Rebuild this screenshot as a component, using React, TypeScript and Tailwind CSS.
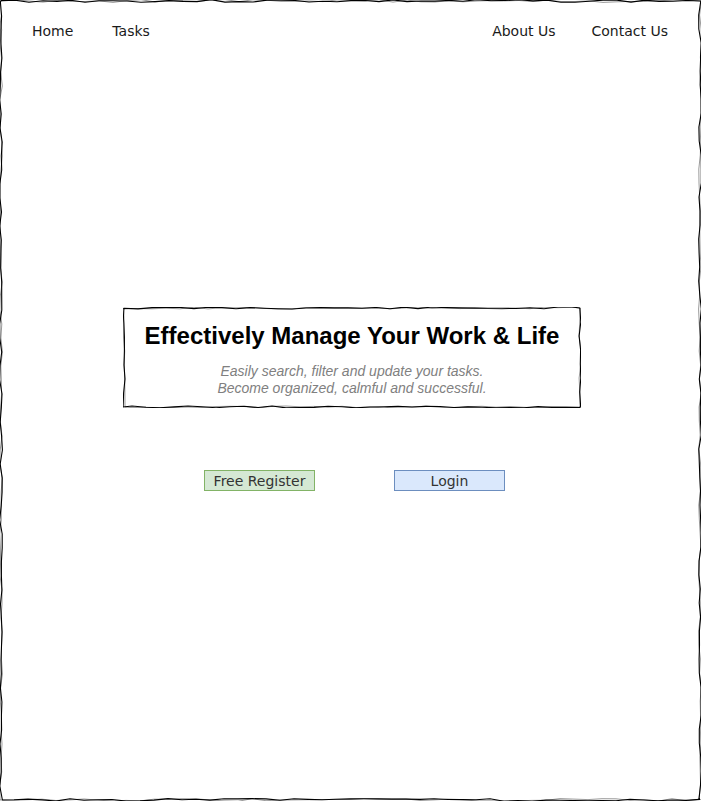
import React from "react";

// deterministic jitter so the sketch border is stable between renders
function rng(seed: number) {
    let s = seed;
    return () => {
        s = (s * 9301 + 49297) % 233280;
        return s / 233280;
    };
}

function roughRect(w: number, h: number, inset: number, seed: number, amp: number) {
    const r = rng(seed);
    const j = () => (r() - 0.5) * 2 * amp;
    const pts: [number, number][] = [];
    const step = 14;
    const x0 = inset, y0 = inset, x1 = w - inset, y1 = h - inset;
    for (let x = x0; x < x1; x += step) pts.push([x, y0 + j()]);
    for (let y = y0; y < y1; y += step) pts.push([x1 + j(), y]);
    for (let x = x1; x > x0; x -= step) pts.push([x, y1 + j()]);
    for (let y = y1; y > y0; y -= step) pts.push([x0 + j(), y]);
    return "M" + pts.map((p) => p[0].toFixed(1) + " " + p[1].toFixed(1)).join(" L") + " Z";
}

function SketchBorder({ w, h, seed, amp = 1.2 }: { w: number; h: number; seed: number; amp?: number }) {
    return (
        <svg className="pointer-events-none absolute inset-0" width={w} height={h} viewBox={`0 0 ${w} ${h}`}>
            <path d={roughRect(w, h, 1, seed, amp)} fill="none" stroke="#000" strokeWidth={1.1} strokeLinejoin="round" />
            <path d={roughRect(w, h, 1, seed + 7, amp)} fill="none" stroke="#000" strokeOpacity={0.5} strokeWidth={0.8} strokeLinejoin="round" />
        </svg>
    );
}

export default function App() {
    return (
        <div className="relative w-[701px] h-[801px] bg-white overflow-hidden" style={{ fontFamily: "'DejaVu Sans', Verdana, sans-serif" }}>
            <SketchBorder w={701} h={801} seed={3} amp={1.4} />

            {/* Nav */}
            <nav className="flex h-[62px] items-center justify-between pl-[32px] pr-[33px] text-[14px] text-[#1a1a1a]">
                <div className="flex gap-[39px]">
                    <span>Home</span>
                    <span>Tasks</span>
                </div>
                <div className="flex gap-[36px]">
                    <span>About Us</span>
                    <span>Contact Us</span>
                </div>
            </nav>

            {/* Hero */}
            <div className="relative ml-[123px] mt-[245px] flex h-[101px] w-[458px] flex-col items-center pt-[14px]" style={{ fontFamily: "'Liberation Sans', Arial, sans-serif" }}>
                <SketchBorder w={458} h={101} seed={11} amp={1.1} />
                <h1 className="text-[24px] font-bold leading-[30px] text-black">Effectively Manage Your Work &amp; Life</h1>
                <p className="mt-[12px] text-center text-[14px] italic leading-[17px] text-[#808080]">
                    Easily search, filter and update your tasks.
                    <br />
                    Become organized, calmful and successful.
                </p>
            </div>

            {/* Actions */}
            <div className="ml-[204px] mt-[62px] flex gap-[79px] text-[14px] text-[#333333]">
                <button className="h-[21px] w-[111px] border border-[#82b366] bg-[#d5e8d4] pt-px leading-[18px]">Free Register</button>
                <button className="h-[21px] w-[111px] border border-[#6c8ebf] bg-[#dae8fc] pt-px leading-[18px]">Login</button>
            </div>
        </div>
    );
}
